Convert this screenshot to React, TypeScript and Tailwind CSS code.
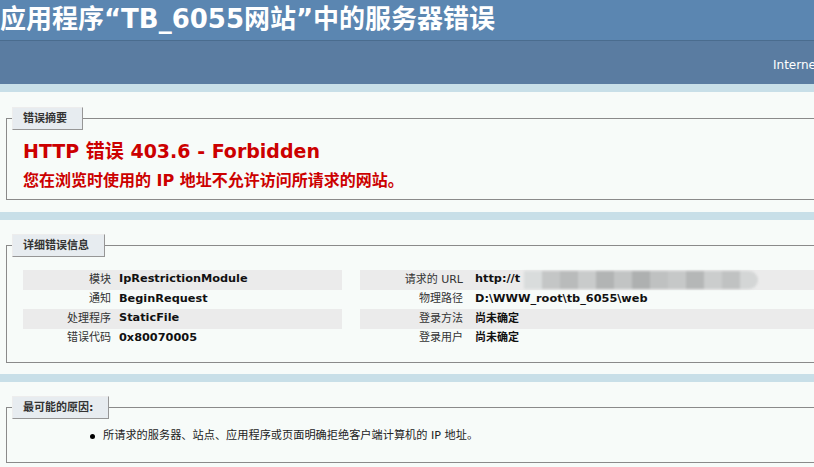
import React from "react";

const Legend = ({ children }: { children: React.ReactNode }) => (
  <legend className="ml-[5px] pl-[10px] pr-[15px] py-[4px] text-[11px] leading-[13px] font-bold text-[#333] bg-[#e7ecf0] border border-t-[#ededed] border-l-[#ededed] border-r-[#969696] border-b-[#969696]">
    {children}
  </legend>
);

const leftRows = [
  ["模块", "IpRestrictionModule"],
  ["通知", "BeginRequest"],
  ["处理程序", "StaticFile"],
  ["错误代码", "0x80070005"],
];

const shades = ["#d9dcdc", "#c4c6c6", "#b9bbbb", "#c9cbcb", "#b2b4b4", "#c2c4c4", "#aeb0b0", "#bfc1c1", "#c6c8c8", "#b5b7b7", "#cbcdcd", "#c0c2c2", "#d4d6d6"];

export default function App() {
  return (
    <div className="w-[814px] h-[467px] overflow-hidden bg-[#c8dfe8] font-['DejaVu_Sans','Noto_Sans_CJK_SC',sans-serif]">
      <div className="h-[40px] bg-[#5b86b1] text-white text-[26px] leading-[38px] font-bold whitespace-nowrap">
        应用程序“TB_6055网站”中的服务器错误
      </div>
      <div className="h-[44px] bg-[#5a7ca1] border-t border-[#4a6c8e] text-white text-[12px] whitespace-nowrap pl-[773px] pt-[15px]">
        Internet Information Services 7.5
      </div>
      <div className="flex flex-col gap-[8px] pt-[8px] w-[900px]">
        {/* Box 1 */}
        <div className="bg-[#f7fbf9] pt-[15px] pb-[12px] px-[6px]">
          <fieldset className="border border-[#8a8a8a] pb-[7px]">
            <Legend>错误摘要</Legend>
            <div className="pl-[16px]">
              <div className="mt-[10px] text-[19px] leading-[22px] font-bold text-[#cc0000]">
                HTTP 错误 403.6 - Forbidden
              </div>
              <div className="mt-[8px] text-[16px] leading-[22px] font-bold text-[#cc0000]">
                您在浏览时使用的 IP 地址不允许访问所请求的网站。
              </div>
            </div>
          </fieldset>
        </div>
        {/* Box 2 */}
        <div className="bg-[#f7fbf9] pt-[14px] pb-[11px] px-[6px]">
          <fieldset className="border border-[#8a8a8a] pb-[14px]">
            <Legend>详细错误信息</Legend>
            <div className="mt-[13px] pl-[16px] flex gap-[18px] text-[11px]">
              <div className="w-[319px] flex flex-col">
                {leftRows.map(([k, v], i) => (
                  <div key={k} className={`flex h-[19.5px] items-center ${i % 2 === 0 ? "bg-[#ebebeb]" : ""}`}>
                    <div className="w-[88px] text-right text-[#333]">{k}</div>
                    <div className="pl-[8px] font-bold text-[11.3px] text-[#111]">{v}</div>
                  </div>
                ))}
              </div>
              <div className="flex-1 flex flex-col">
                <div className="flex h-[19.5px] items-center bg-[#ebebeb]">
                  <div className="w-[103px] text-right text-[#333]">请求的 URL</div>
                  <div className="pl-[12px] font-bold text-[11.3px] text-[#111] whitespace-nowrap">http://t</div>
                  <div className="flex h-[18px] ml-[4px] rounded-r-full overflow-hidden blur-[1px]">
                    {shades.map((c, i) => (
                      <div key={i} className="w-[18px] h-full" style={{ backgroundColor: c }} />
                    ))}
                  </div>
                </div>
                <div className="flex h-[19.5px] items-center">
                  <div className="w-[103px] text-right text-[#333]">物理路径</div>
                  <div className="pl-[12px] font-bold text-[11.3px] text-[#111]">D:\WWW_root\tb_6055\web</div>
                </div>
                <div className="flex h-[19.5px] items-center bg-[#ebebeb]">
                  <div className="w-[103px] text-right text-[#333]">登录方法</div>
                  <div className="pl-[12px] font-bold text-[#111]">尚未确定</div>
                </div>
                <div className="flex h-[19.5px] items-center">
                  <div className="w-[103px] text-right text-[#333]">登录用户</div>
                  <div className="pl-[12px] font-bold text-[#111]">尚未确定</div>
                </div>
              </div>
            </div>
          </fieldset>
        </div>
        {/* Box 3 */}
        <div className="bg-[#f7fbf9] pt-[14px] pb-[11px] px-[6px]">
          <fieldset className="border border-[#8a8a8a] pb-[19px]">
            <Legend>最可能的原因:</Legend>
            <div className="mt-[10px] ml-[83px] flex items-center gap-[8px] text-[11.2px] leading-[14px] text-[#222]">
              <span className="w-[5px] h-[5px] rounded-full bg-black" />
              <span>所请求的服务器、站点、应用程序或页面明确拒绝客户端计算机的 IP 地址。</span>
            </div>
          </fieldset>
        </div>
      </div>
    </div>
  );
}
